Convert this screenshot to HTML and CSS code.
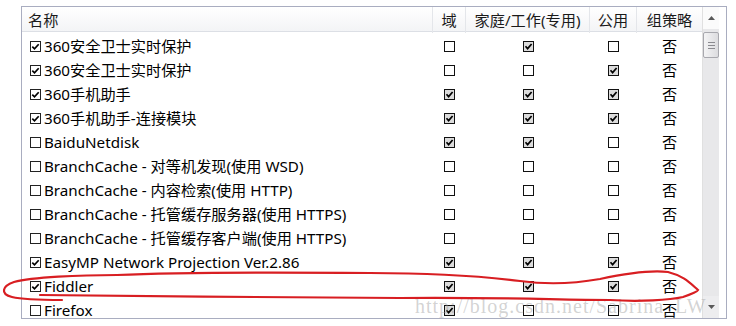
FILE: index.html
```html
<!DOCTYPE html>
<html lang="zh-CN">
<head>
<meta charset="utf-8">
<title>允许的程序</title>
<link rel="stylesheet" href="styles.css">
</head>
<body>
<div class="frame">
  <div class="list">
    <div class="head">
      <div class="hc name">名称</div>
      <div class="hc ctr">域</div>
      <div class="hc ctr">家庭/工作(专用)</div>
      <div class="hc ctr">公用</div>
      <div class="hc ctr">组策略</div>
    </div>
    <div class="rows">
      <div class="row"><div class="nm"><svg class="bx" viewBox="0 0 11 11"><rect x=".5" y=".5" width="10" height="10"/><path d="M2.3 5.6L4.5 7.8 8.7 3.2"/></svg>360安全卫士实时保护</div><div class="c"><svg class="sb" viewBox="0 0 11 11"><rect x=".5" y=".5" width="10" height="10"/></svg></div><div class="c"><svg class="sb on" viewBox="0 0 11 11"><rect x=".5" y=".5" width="10" height="10"/><path d="M2.5 5.3L4.6 7.6 8.6 3"/></svg></div><div class="c"><svg class="sb" viewBox="0 0 11 11"><rect x=".5" y=".5" width="10" height="10"/></svg></div><div class="c fo">否</div></div>
      <div class="row"><div class="nm"><svg class="bx" viewBox="0 0 11 11"><rect x=".5" y=".5" width="10" height="10"/><path d="M2.3 5.6L4.5 7.8 8.7 3.2"/></svg>360安全卫士实时保护</div><div class="c"><svg class="sb" viewBox="0 0 11 11"><rect x=".5" y=".5" width="10" height="10"/></svg></div><div class="c"><svg class="sb" viewBox="0 0 11 11"><rect x=".5" y=".5" width="10" height="10"/></svg></div><div class="c"><svg class="sb on" viewBox="0 0 11 11"><rect x=".5" y=".5" width="10" height="10"/><path d="M2.5 5.3L4.6 7.6 8.6 3"/></svg></div><div class="c fo">否</div></div>
      <div class="row"><div class="nm"><svg class="bx" viewBox="0 0 11 11"><rect x=".5" y=".5" width="10" height="10"/><path d="M2.3 5.6L4.5 7.8 8.7 3.2"/></svg>360手机助手</div><div class="c"><svg class="sb on" viewBox="0 0 11 11"><rect x=".5" y=".5" width="10" height="10"/><path d="M2.5 5.3L4.6 7.6 8.6 3"/></svg></div><div class="c"><svg class="sb on" viewBox="0 0 11 11"><rect x=".5" y=".5" width="10" height="10"/><path d="M2.5 5.3L4.6 7.6 8.6 3"/></svg></div><div class="c"><svg class="sb on" viewBox="0 0 11 11"><rect x=".5" y=".5" width="10" height="10"/><path d="M2.5 5.3L4.6 7.6 8.6 3"/></svg></div><div class="c fo">否</div></div>
      <div class="row"><div class="nm"><svg class="bx" viewBox="0 0 11 11"><rect x=".5" y=".5" width="10" height="10"/><path d="M2.3 5.6L4.5 7.8 8.7 3.2"/></svg>360手机助手-连接模块</div><div class="c"><svg class="sb on" viewBox="0 0 11 11"><rect x=".5" y=".5" width="10" height="10"/><path d="M2.5 5.3L4.6 7.6 8.6 3"/></svg></div><div class="c"><svg class="sb on" viewBox="0 0 11 11"><rect x=".5" y=".5" width="10" height="10"/><path d="M2.5 5.3L4.6 7.6 8.6 3"/></svg></div><div class="c"><svg class="sb on" viewBox="0 0 11 11"><rect x=".5" y=".5" width="10" height="10"/><path d="M2.5 5.3L4.6 7.6 8.6 3"/></svg></div><div class="c fo">否</div></div>
      <div class="row"><div class="nm"><svg class="bx" viewBox="0 0 11 11"><rect x=".5" y=".5" width="10" height="10"/></svg>BaiduNetdisk</div><div class="c"><svg class="sb on" viewBox="0 0 11 11"><rect x=".5" y=".5" width="10" height="10"/><path d="M2.5 5.3L4.6 7.6 8.6 3"/></svg></div><div class="c"><svg class="sb on" viewBox="0 0 11 11"><rect x=".5" y=".5" width="10" height="10"/><path d="M2.5 5.3L4.6 7.6 8.6 3"/></svg></div><div class="c"><svg class="sb" viewBox="0 0 11 11"><rect x=".5" y=".5" width="10" height="10"/></svg></div><div class="c fo">否</div></div>
      <div class="row"><div class="nm"><svg class="bx" viewBox="0 0 11 11"><rect x=".5" y=".5" width="10" height="10"/></svg>BranchCache - 对等机发现(使用 WSD)</div><div class="c"><svg class="sb" viewBox="0 0 11 11"><rect x=".5" y=".5" width="10" height="10"/></svg></div><div class="c"><svg class="sb" viewBox="0 0 11 11"><rect x=".5" y=".5" width="10" height="10"/></svg></div><div class="c"><svg class="sb" viewBox="0 0 11 11"><rect x=".5" y=".5" width="10" height="10"/></svg></div><div class="c fo">否</div></div>
      <div class="row"><div class="nm"><svg class="bx" viewBox="0 0 11 11"><rect x=".5" y=".5" width="10" height="10"/></svg>BranchCache - 内容检索(使用 HTTP)</div><div class="c"><svg class="sb" viewBox="0 0 11 11"><rect x=".5" y=".5" width="10" height="10"/></svg></div><div class="c"><svg class="sb" viewBox="0 0 11 11"><rect x=".5" y=".5" width="10" height="10"/></svg></div><div class="c"><svg class="sb" viewBox="0 0 11 11"><rect x=".5" y=".5" width="10" height="10"/></svg></div><div class="c fo">否</div></div>
      <div class="row"><div class="nm"><svg class="bx" viewBox="0 0 11 11"><rect x=".5" y=".5" width="10" height="10"/></svg>BranchCache - 托管缓存服务器(使用 HTTPS)</div><div class="c"><svg class="sb" viewBox="0 0 11 11"><rect x=".5" y=".5" width="10" height="10"/></svg></div><div class="c"><svg class="sb" viewBox="0 0 11 11"><rect x=".5" y=".5" width="10" height="10"/></svg></div><div class="c"><svg class="sb" viewBox="0 0 11 11"><rect x=".5" y=".5" width="10" height="10"/></svg></div><div class="c fo">否</div></div>
      <div class="row"><div class="nm"><svg class="bx" viewBox="0 0 11 11"><rect x=".5" y=".5" width="10" height="10"/></svg>BranchCache - 托管缓存客户端(使用 HTTPS)</div><div class="c"><svg class="sb" viewBox="0 0 11 11"><rect x=".5" y=".5" width="10" height="10"/></svg></div><div class="c"><svg class="sb" viewBox="0 0 11 11"><rect x=".5" y=".5" width="10" height="10"/></svg></div><div class="c"><svg class="sb" viewBox="0 0 11 11"><rect x=".5" y=".5" width="10" height="10"/></svg></div><div class="c fo">否</div></div>
      <div class="row"><div class="nm"><svg class="bx" viewBox="0 0 11 11"><rect x=".5" y=".5" width="10" height="10"/><path d="M2.3 5.6L4.5 7.8 8.7 3.2"/></svg>EasyMP Network Projection Ver.2.86</div><div class="c"><svg class="sb on" viewBox="0 0 11 11"><rect x=".5" y=".5" width="10" height="10"/><path d="M2.5 5.3L4.6 7.6 8.6 3"/></svg></div><div class="c"><svg class="sb on" viewBox="0 0 11 11"><rect x=".5" y=".5" width="10" height="10"/><path d="M2.5 5.3L4.6 7.6 8.6 3"/></svg></div><div class="c"><svg class="sb on" viewBox="0 0 11 11"><rect x=".5" y=".5" width="10" height="10"/><path d="M2.5 5.3L4.6 7.6 8.6 3"/></svg></div><div class="c fo">否</div></div>
      <div class="row"><div class="nm"><svg class="bx" viewBox="0 0 11 11"><rect x=".5" y=".5" width="10" height="10"/><path d="M2.3 5.6L4.5 7.8 8.7 3.2"/></svg>Fiddler</div><div class="c"><svg class="sb on" viewBox="0 0 11 11"><rect x=".5" y=".5" width="10" height="10"/><path d="M2.5 5.3L4.6 7.6 8.6 3"/></svg></div><div class="c"><svg class="sb on" viewBox="0 0 11 11"><rect x=".5" y=".5" width="10" height="10"/><path d="M2.5 5.3L4.6 7.6 8.6 3"/></svg></div><div class="c"><svg class="sb on" viewBox="0 0 11 11"><rect x=".5" y=".5" width="10" height="10"/><path d="M2.5 5.3L4.6 7.6 8.6 3"/></svg></div><div class="c fo">否</div></div>
      <div class="row"><div class="nm"><svg class="bx" viewBox="0 0 11 11"><rect x=".5" y=".5" width="10" height="10"/></svg>Firefox</div><div class="c"><svg class="sb on" viewBox="0 0 11 11"><rect x=".5" y=".5" width="10" height="10"/><path d="M2.5 5.3L4.6 7.6 8.6 3"/></svg></div><div class="c"><svg class="sb" viewBox="0 0 11 11"><rect x=".5" y=".5" width="10" height="10"/></svg></div><div class="c"><svg class="sb" viewBox="0 0 11 11"><rect x=".5" y=".5" width="10" height="10"/></svg></div><div class="c fo">否</div></div>
    </div>
  </div>
  <div class="scroll">
    <div class="sbtn up"><svg viewBox="0 0 7 4" class="arr"><path d="M0 4L3.5 0 7 4Z"/></svg></div>
    <div class="thumb"><i></i><i></i><i></i></div>
    <div class="track"></div>
    <div class="sbtn dn"><svg viewBox="0 0 7 4" class="arr"><path d="M0 0L3.5 4 7 0Z"/></svg></div>
  </div>
</div>
<div class="mark">http://blog.csdn.net/Sabrina_LW</div>
<svg class="ink" viewBox="0 0 736 326" width="736" height="326">
  <path d="M117 275 C80 275 32 277 14 282 C2 286 0 294 12 297 C24 300 45 300 62 300"/>
  <path d="M40 295 C150 296 300 298 400 298 C500 297 560 300 610 300 C640 302 670 300 683 297 C692 294 697 292 698 290 C690 283 684 276 668 272 C650 270 628 273 600 279 C572 284 542 284 520 281 C480 276 420 273 370 273 C250 272 180 272 117 275"/>
</svg>
</body>
</html>
```

FILE: styles.css
```css
html, body {
  margin: 0;
  padding: 0;
}
body {
  position: relative;
  width: 736px;
  height: 326px;
  overflow: hidden;
  background: #fff;
  font-family: "Noto Sans", "Noto Sans CJK SC", sans-serif;
  font-size: 15.2px;
  color: #000;
}
.frame {
  box-sizing: border-box;
  margin: 6px 0 0 21px;
  width: 706px;
  height: 313px;
  border: 1px solid #a9adc0;
  display: flex;
  overflow: hidden;
}
.list {
  width: 680px;
  flex: none;
  overflow: hidden;
}
.head {
  display: grid;
  grid-template-columns: 411px 33px 124px 47px 65px;
  height: 25px;
  box-sizing: border-box;
  border-bottom: 1px solid #dcdfe5;
  background: linear-gradient(#ffffff, #f3f4f6);
}
.hc {
  box-sizing: border-box;
  border-right: 1px solid #e4e6ea;
  line-height: 26px;
  color: #1a1a1a;
  white-space: nowrap;
}
.hc:last-child {
  border-right: 0;
}
.hc.name {
  padding-left: 6px;
}
.hc.ctr {
  text-align: center;
}
.rows {
  padding-top: 2px;
}
.row {
  display: grid;
  grid-template-columns: 411px 33px 124px 47px 65px;
  height: 24px;
  align-items: center;
}
.nm {
  display: flex;
  align-items: center;
  white-space: nowrap;
  line-height: 24px;
}
.bx {
  width: 11px;
  height: 11px;
  margin: 0 3px 0 8px;
  flex: none;
}
.bx rect {
  fill: #fff;
  stroke: #222;
}
.bx path, .sb path {
  fill: none;
  stroke: #000;
  stroke-width: 1.7;
}
.c {
  display: flex;
  justify-content: center;
  align-items: center;
}
.sb {
  width: 11px;
  height: 11px;
  display: block;
}
.sb rect {
  fill: #fff;
  stroke: #111;
}
.sb.on rect {
  fill: #dcdcdc;
}
.fo {
  line-height: 24px;
}
.scroll {
  width: 17px;
  flex: none;
  display: flex;
  flex-direction: column;
  background: #e8e8ea;
  border-left: 1px solid #e0e0e0;
  box-sizing: border-box;
}
.sbtn {
  height: 22px;
  flex: none;
  display: flex;
  align-items: center;
  justify-content: center;
  background: #fbfbfb;
}
.sbtn.dn {
  background: #ededef;
}
.arr {
  width: 7px;
  height: 4px;
  fill: #5a5a5a;
}
.thumb {
  margin: 3px 0 0 0;
  height: 26px;
  box-sizing: border-box;
  border: 1px solid #a8a8ae;
  border-radius: 2px;
  background: linear-gradient(90deg, #f4f4f5, #dcdcdf);
  display: flex;
  flex-direction: column;
  justify-content: center;
  align-items: center;
  gap: 2px;
}
.thumb i {
  display: block;
  width: 7px;
  height: 1px;
  background: #8a8a8f;
}
.track {
  flex: 1;
}
.mark {
  position: absolute;
  left: 415px;
  top: 295px;
  font-family: "Liberation Serif", serif;
  font-size: 20px;
  letter-spacing: 1px;
  color: rgba(150, 150, 150, 0.42);
  white-space: nowrap;
  pointer-events: none;
}
.ink {
  position: absolute;
  left: 0;
  top: 0;
  fill: none;
  stroke: #d81e22;
  stroke-width: 2.2;
  stroke-linecap: round;
  pointer-events: none;
}
```
